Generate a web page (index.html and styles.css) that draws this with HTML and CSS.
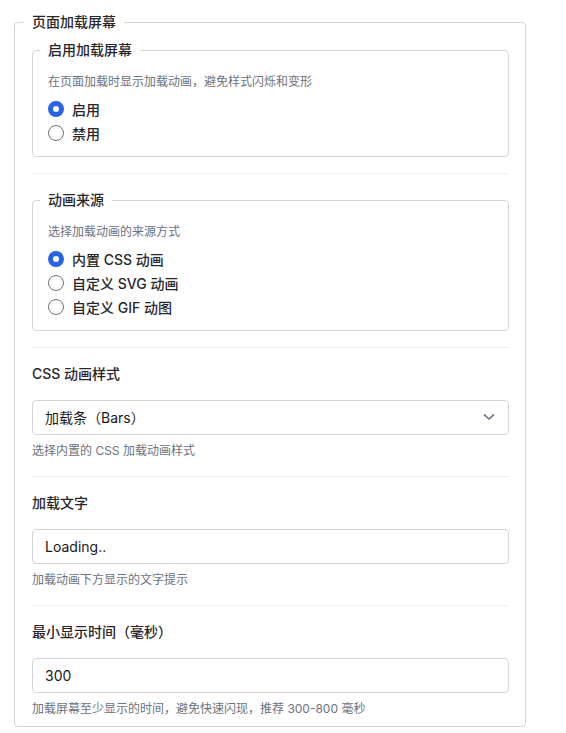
FILE: index.html
```html
<!DOCTYPE html>
<html lang="zh-CN">
<head>
    <meta charset="UTF-8">
    <meta name="viewport" content="width=device-width, initial-scale=1.0">
    <title>页面加载屏幕</title>
    <link rel="stylesheet" href="styles.css">
</head>
<body>

<div class="panel">
    <fieldset class="group">
        <legend>页面加载屏幕</legend>

        <div class="field">
            <fieldset class="choice">
                <legend>启用加载屏幕</legend>
                <p class="desc">在页面加载时显示加载动画，避免样式闪烁和变形</p>
                <label class="radio"><input type="radio" name="enable" checked> 启用</label>
                <label class="radio"><input type="radio" name="enable"> 禁用</label>
            </fieldset>
        </div>

        <div class="field">
            <fieldset class="choice">
                <legend>动画来源</legend>
                <p class="desc">选择加载动画的来源方式</p>
                <label class="radio"><input type="radio" name="source" checked> 内置 CSS 动画</label>
                <label class="radio"><input type="radio" name="source"> 自定义 SVG 动画</label>
                <label class="radio"><input type="radio" name="source"> 自定义 GIF 动图</label>
            </fieldset>
        </div>

        <div class="field">
            <label class="label" for="style">CSS 动画样式</label>
            <div class="select-wrap">
                <select id="style" class="control">
                    <option>加载条（Bars）</option>
                    <option>旋转圆环（Spinner）</option>
                    <option>跳动圆点（Dots）</option>
                </select>
                <svg class="chevron" width="12" height="8" viewBox="0 0 12 8">
                    <path d="M1.5 1.8 L6 6 L10.5 1.8" fill="none" stroke="#6b7280" stroke-width="1.6" stroke-linecap="round" stroke-linejoin="round"/>
                </svg>
            </div>
            <p class="help">选择内置的 CSS 加载动画样式</p>
        </div>

        <div class="field">
            <label class="label" for="text">加载文字</label>
            <input type="text" id="text" class="control" value="Loading..">
            <p class="help">加载动画下方显示的文字提示</p>
        </div>

        <div class="field">
            <label class="label" for="time">最小显示时间（毫秒）</label>
            <input type="text" id="time" class="control" value="300">
            <p class="help">加载屏幕至少显示的时间，避免快速闪现，推荐 300-800 毫秒</p>
        </div>
    </fieldset>
</div>

</body>
</html>
```

FILE: styles.css
```css
body {
    margin: 0;
    padding: 0;
    background-color: #f8f8f9;
    color: #1f2937;
    font-family: Inter, "Noto Sans CJK SC", sans-serif;
}

.panel {
    background-color: white;
    padding: 12px 40px 3px 14px;
}

fieldset {
    margin: 0;
    min-width: 0;
    border: 1px solid #d4d4d8;
    border-radius: 4px;
}

legend {
    padding: 0 8px;
    margin-left: -8px;
    font-size: 14px;
    line-height: 20px;
    font-weight: 500;
    color: #27272a;
}

.group {
    padding: 8px 16px 8px 17px;
}

.field {
    padding: 16px 0;
    border-bottom: 1px solid #f0f0f2;
}

.field:first-of-type {
    padding-top: 0;
}

.field:last-of-type {
    padding-bottom: 0;
    border-bottom: none;
}

.choice {
    padding: 13px 16px 11px 15px;
}

.desc {
    margin: 0 0 6px;
    font-size: 12px;
    line-height: 18px;
    color: #6b7280;
}

.radio {
    display: flex;
    align-items: center;
    height: 24px;
    font-size: 14px;
    font-weight: 500;
    color: #27272a;
}

.radio input {
    appearance: none;
    -webkit-appearance: none;
    width: 16px;
    height: 16px;
    margin: 0 8px 0 0;
    border: 1px solid #71717a;
    border-radius: 50%;
    background-color: white;
}

.radio input:checked {
    border: 5px solid #2563eb;
}

.label {
    display: block;
    margin-bottom: 16px;
    font-size: 14px;
    line-height: 20px;
    font-weight: 500;
    color: #27272a;
}

.control {
    display: block;
    box-sizing: border-box;
    width: 100%;
    height: 35px;
    margin: 0;
    padding: 0 12px;
    border: 1px solid #d4d4d8;
    border-radius: 4px;
    background-color: white;
    font-family: inherit;
    font-size: 14px;
    color: #18181b;
    outline: none;
}

.select-wrap {
    position: relative;
}

select.control {
    appearance: none;
    -webkit-appearance: none;
}

.chevron {
    position: absolute;
    right: 14px;
    top: 13px;
    pointer-events: none;
}

.help {
    margin: 7px 0 0;
    font-size: 12px;
    line-height: 18px;
    color: #6b7280;
}
```
